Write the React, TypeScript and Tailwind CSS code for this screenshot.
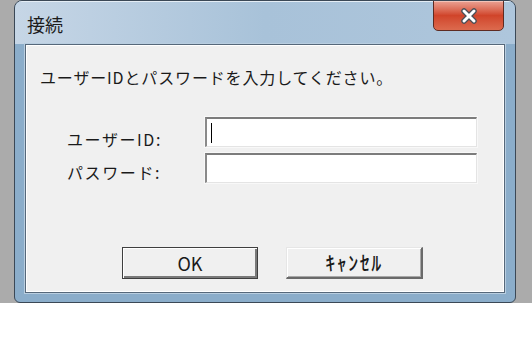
import React from 'react';

const font = "font-['MS_UI_Gothic','Noto_Sans_CJK_JP',sans-serif]";

const CloseGlyph: React.FC = () => (
    <svg width="20" height="16" viewBox="0 0 20 16">
        <path d="M5 3 L15 13 M15 3 L5 13" stroke="#4a4f57" strokeWidth={5.5} strokeLinecap="round" fill="none" />
        <path d="M5 3 L15 13 M15 3 L5 13" stroke="#ffffff" strokeWidth={3} strokeLinecap="round" fill="none" />
    </svg>
);

const TextBox: React.FC<{ caret?: boolean }> = ({ caret }) => (
    <div className="w-[272px] h-[30px] bg-white border-t-2 border-l-2 border-t-[#7c7c7c] border-l-[#8a8a8a] border-b border-r border-b-[#e4e4e4] border-r-[#e4e4e4] shadow-[0_0_0_1px_#f8f8f8] flex items-center pl-[4px]">
        {caret && <div className="w-px h-[20px] bg-black" />}
    </div>
);

const App: React.FC = () => {
    return (
        <div className={`w-[532px] h-[350px] bg-white ${font}`}>
            <div className="h-[303px] bg-[#ababab] pl-[14px] pr-[16px] flex">
                {/* window frame */}
                <div className="relative flex-1 flex flex-col rounded-t-[8px] rounded-b-[6px] border border-[#3b4856] bg-[#8badca] overflow-hidden">
                    {/* title bar */}
                    <div className="h-[43px] shrink-0 bg-gradient-to-r from-[#c6d6e6] via-[#a8c2d9] to-[#aec6dc] border-t border-t-[#e4edf5] pl-[12px] pt-[11px]">
                        <span className="text-[18px] leading-none text-[#1c1c1c]">接続</span>
                    </div>
                    <div className="absolute top-[-1px] right-[11px] w-[71px] h-[31px] rounded-b-[5px] border border-[#5e2b22] bg-gradient-to-b from-[#eaa193] via-[#d0442a] to-[#dc6a4e] shadow-[inset_0_1px_0_#f3c3b8] flex items-center justify-center">
                        <CloseGlyph />
                    </div>

                    {/* client area */}
                    <div className="flex-1 mx-[10px] mb-[9px] border border-[#56687a] bg-[#f0f0f0] shadow-[inset_0_0_0_1px_#ffffff,0_0_0_1px_#b9cee0] flex flex-col">
                        <div className="pl-[14px] pt-[21px] text-[16px] leading-[22px] text-[#1a1a1a] tracking-[0.85px]">
                            ユーザーIDとパスワードを入力してください。
                        </div>

                        <div className="mt-[29px] pl-[41px] flex flex-col gap-[6px] text-[16px] text-[#1a1a1a]">
                            <div className="flex items-end">
                                <div className="w-[138px] leading-none pb-[0px] tracking-[1.6px]">ユーザーID:</div>
                                <TextBox caret />
                            </div>
                            <div className="flex items-end">
                                <div className="w-[138px] leading-none pb-[3px] tracking-[1.6px]">パスワード:</div>
                                <TextBox />
                            </div>
                        </div>

                        <div className="mt-[64px] pl-[96px] flex gap-[28px] text-[#1a1a1a]">
                            <button className="w-[136px] h-[32px] bg-[#f0f0f0] border border-[#3f3f3f] shadow-[inset_1px_1px_0_#ffffff,inset_-2px_-2px_0_#7a7a7a] flex items-center justify-center leading-none text-[18px]">
                                OK
                            </button>
                            <button className="w-[137px] h-[32px] bg-[#f0f0f0] border-t border-l border-t-[#e6e6e6] border-l-[#e6e6e6] border-b-2 border-r-2 border-b-[#6a6a6a] border-r-[#6a6a6a] shadow-[inset_1px_1px_0_#ffffff,inset_-1px_-1px_0_#a8a8a8] flex items-center justify-center leading-none text-[20px] tracking-[1.5px] font-medium">
                                ｷｬﾝｾﾙ
                            </button>
                        </div>
                    </div>
                </div>
            </div>
        </div>
    );
};

export default App;
